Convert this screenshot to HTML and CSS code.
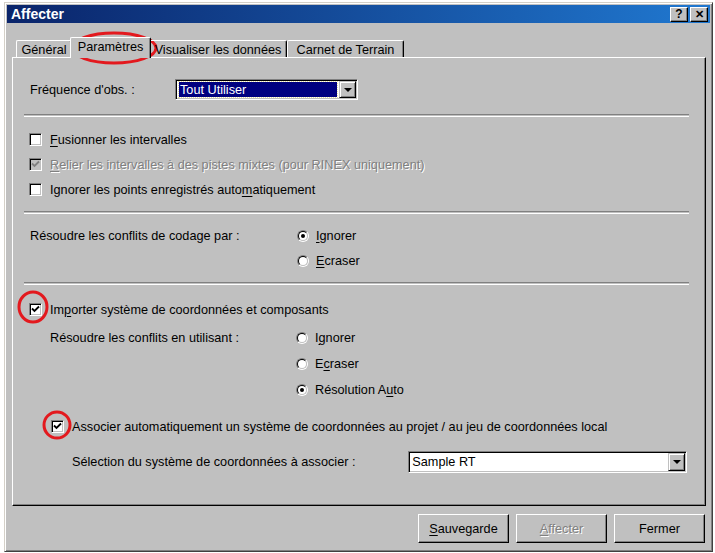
FILE: index.html
```html
<html>
    <head>
        <meta charset="UTF-8">
        <title>Affecter</title>
        <link rel="stylesheet" href="styles.css">
    </head>
    <body>
        <div class="window">
            <div class="titlebar">
                <span class="caption">Affecter</span>
                <span class="tbtn">?</span>
                <span class="tbtn close">&#x2715;</span>
            </div>

            <div class="tabs">
                <div class="tab" style="width: 56px">Général</div>
                <div class="tab active" style="width: 81px">Paramètres</div>
                <div class="tab" style="width: 138px">Visualiser les données</div>
                <div class="tab" style="width: 117px">Carnet de Terrain</div>
            </div>

            <div class="panel">
                <div class="row combo-row">
                    <span class="label freq">Fréquence d'obs. :</span>
                    <div class="combo small">
                        <div class="combo-text selected"><span>Tout Utiliser</span></div>
                        <div class="combo-arrow"><span class="tri"></span></div>
                    </div>
                </div>

                <div class="sep first"></div>

                <div class="checks">
                    <div class="row check-row">
                        <span class="box"></span>
                        <span><u>F</u>usionner les intervalles</span>
                    </div>
                    <div class="row check-row disabled">
                        <span class="box checked">
                            <svg width="9" height="9" viewBox="0 0 9 9"><path d="M1 3.5 L3.5 6 L8 1.5" /></svg>
                        </span>
                        <span class="grey"><u>R</u>elier les intervalles à des pistes mixtes (pour RINEX uniquement)</span>
                    </div>
                    <div class="row check-row">
                        <span class="box"></span>
                        <span>Ignorer les points enregistrés auto<u>m</u>atiquement</span>
                    </div>
                </div>

                <div class="sep"></div>

                <div class="group codage">
                    <div class="row radio-row">
                        <span class="label">Résoudre les conflits de codage par :</span>
                        <span class="radio on"><span class="ring"></span></span>
                        <span><u>I</u>gnorer</span>
                    </div>
                    <div class="row radio-row">
                        <span class="label"></span>
                        <span class="radio"><span class="ring"></span></span>
                        <span><u>E</u>craser</span>
                    </div>
                </div>

                <div class="sep"></div>

                <div class="row check-row importer">
                    <span class="box">
                        <svg width="9" height="9" viewBox="0 0 9 9"><path d="M1 3.5 L3.5 6 L8 1.5" /></svg>
                    </span>
                    <span>Im<u>p</u>orter système de coordonnées et composants</span>
                </div>

                <div class="group conflits">
                    <div class="row radio-row tall">
                        <span class="label">Résoudre les conflits en utilisant :</span>
                        <span class="radio"><span class="ring"></span></span>
                        <span>I<u>g</u>norer</span>
                    </div>
                    <div class="row radio-row tall">
                        <span class="label"></span>
                        <span class="radio"><span class="ring"></span></span>
                        <span>E<u>c</u>raser</span>
                    </div>
                    <div class="row radio-row tall">
                        <span class="label"></span>
                        <span class="radio on"><span class="ring"></span></span>
                        <span>Résolution A<u>u</u>to</span>
                    </div>
                </div>

                <div class="row check-row associer">
                    <span class="box">
                        <svg width="9" height="9" viewBox="0 0 9 9"><path d="M1 3.5 L3.5 6 L8 1.5" /></svg>
                    </span>
                    <span>Associer automatiquement un système de coordonnées au projet / au jeu de coordonnées local</span>
                </div>

                <div class="row combo-row selection">
                    <span class="label sel">Sélection du système de coordonnées à associer :</span>
                    <div class="combo wide">
                        <div class="combo-text"><span>Sample RT</span></div>
                        <div class="combo-arrow"><span class="tri"></span></div>
                    </div>
                </div>
            </div>

            <div class="buttons">
                <button class="btn"><u>S</u>auvegarde</button>
                <button class="btn" disabled><span class="grey"><u>A</u>ffecter</span></button>
                <button class="btn">Fermer</button>
            </div>
        </div>

        <!-- red hand-drawn markers -->
        <svg class="marks" width="715" height="553">
            <ellipse cx="114" cy="48" rx="42" ry="15" />
            <ellipse cx="33" cy="307" rx="14" ry="15" />
            <ellipse cx="57" cy="425" rx="13" ry="13" />
        </svg>
    </body>
</html>
```

FILE: styles.css
```css
body {
    margin: 0;
    background-color: white;
    font-family: "Liberation Sans", Arial, sans-serif;
    font-size: 12.7px;
    color: black;
}

u { text-decoration: underline; text-underline-offset: 2px; }

.window {
    box-sizing: border-box;
    width: 709px;
    height: 550px;
    margin: 2px 0 0 4px;
    padding: 2px;
    display: flex;
    flex-direction: column;
    background-color: #c0c0c0;
    border: 1px solid;
    border-color: #d4d0c8 #404040 #404040 #d4d0c8;
    box-shadow: inset 1px 1px #fff, inset -1px -1px #808080;
}

.titlebar {
    height: 18px;
    display: flex;
    align-items: center;
    padding: 0 2px 0 4px;
    background: linear-gradient(to right, #0a246a, #2078d0);
    color: white;
}

.caption {
    flex: 1;
    font-weight: bold;
    font-size: 14px;
}

.tbtn {
    box-sizing: border-box;
    width: 18px;
    height: 15px;
    margin-left: 2px;
    display: flex;
    align-items: center;
    justify-content: center;
    background-color: #c0c0c0;
    color: black;
    font-weight: bold;
    font-size: 12px;
    border: 1px solid;
    border-color: #fff #000 #000 #fff;
    box-shadow: inset -1px -1px #808080;
}

.tbtn.close { font-size: 11px; }

/* tab strip */
.tabs {
    display: flex;
    align-items: flex-end;
    height: 20px;
    margin-top: 14px;
    padding-left: 9px;
    position: relative;
    z-index: 1;
}

.tab {
    box-sizing: border-box;
    height: 17px;
    display: flex;
    justify-content: center;
    align-items: center;
    padding-top: 1px;
    border-top: 1px solid #fff;
    border-left: 1px solid #fff;
    border-right: 1px solid #000;
    box-shadow: inset -1px 0 #808080;
    border-radius: 2px 2px 0 0;
    white-space: nowrap;
}

.tab.active {
    height: 21px;
    margin: 0 -2px -1px;
    padding-bottom: 3px;
    background-color: #c0c0c0;
    position: relative;
}

.panel {
    box-sizing: border-box;
    width: 694px;
    height: 449px;
    margin-left: 5px;
    padding: 0 18px 0 16px;
    border: 1px solid;
    border-color: #fff #000 #000 #fff;
    box-shadow: inset -1px -1px #808080;
}

.row {
    display: flex;
    align-items: center;
    white-space: nowrap;
}

.combo-row { margin-top: 21px; height: 21px; }

.label.freq { width: 145px; padding-left: 1px; }

.sep {
    height: 1px;
    margin: 9px -2px 0 -5px;
    border-top: 1px solid #808080;
    border-bottom: 1px solid #fff;
}

.sep.first { margin-top: 14px; }

.checks { margin-top: 10px; }

.check-row { height: 25px; }

.box {
    box-sizing: border-box;
    width: 13px;
    height: 13px;
    margin-right: 8px;
    display: flex;
    align-items: center;
    justify-content: center;
    background-color: white;
    border: 1px solid;
    border-color: #808080 #fff #fff #808080;
    box-shadow: inset 1px 1px #000, inset -1px -1px #c0c0c0;
}

.box svg path {
    fill: none;
    stroke: black;
    stroke-width: 1.8;
}

.box.checked { background-color: #c0c0c0; }
.box.checked svg path { stroke: #808080; }

.grey {
    color: #808080;
    text-shadow: 1px 1px #fff;
}

.group.codage { margin-top: 9px; }
.group.codage .label { width: 267px; padding-left: 1px; }

.radio-row { height: 25px; }
.radio-row.tall { height: 26px; }

.radio {
    box-sizing: border-box;
    width: 12px;
    height: 12px;
    margin-right: 7px;
    border-radius: 50%;
    border: 1px solid;
    border-color: #808080 #fff #fff #808080;
}

.radio .ring {
    box-sizing: border-box;
    display: flex;
    align-items: center;
    justify-content: center;
    width: 10px;
    height: 10px;
    border-radius: 50%;
    background-color: white;
    border: 1px solid;
    border-color: #000 #c0c0c0 #c0c0c0 #000;
}

.radio.on .ring::after {
    content: "";
    width: 4px;
    height: 4px;
    border-radius: 50%;
    background-color: black;
}

.importer { margin-top: 12px; }

.group.conflits { margin-top: 3px; }
.group.conflits .label { width: 246px; padding-left: 21px; }

.associer { margin-top: 11px; padding-left: 22px; }

.selection { margin-top: 12px; height: 22px; }
.label.sel { width: 338px; padding-left: 43px; }

/* drop-down lists */
.combo {
    box-sizing: border-box;
    height: 21px;
    display: flex;
    padding: 1px;
    background-color: white;
    border: 1px solid;
    border-color: #808080 #fff #fff #808080;
    box-shadow: inset 1px 1px #000, inset -1px -1px #c0c0c0;
}

.combo.small { width: 183px; }
.combo.wide { width: 280px; height: 22px; }

.combo-text {
    flex: 1;
    display: flex;
    align-items: center;
    padding: 1px 2px;
}

.combo-text.selected span {
    flex: 1;
    height: 100%;
    box-sizing: border-box;
    display: flex;
    align-items: center;
    padding-left: 1px;
    background-color: #000080;
    color: white;
    outline: 1px dotted #e8e0a0;
}

.combo-arrow {
    box-sizing: border-box;
    width: 17px;
    display: flex;
    align-items: center;
    justify-content: center;
    background-color: #c0c0c0;
    border: 1px solid;
    border-color: #c0c0c0 #000 #000 #c0c0c0;
    box-shadow: inset 1px 1px #fff, inset -1px -1px #808080;
}

.tri {
    width: 0;
    height: 0;
    border-left: 4px solid transparent;
    border-right: 4px solid transparent;
    border-top: 4px solid black;
}

.buttons {
    display: flex;
    justify-content: flex-end;
    gap: 7px;
    margin-top: 8px;
    padding-right: 5px;
}

.btn {
    box-sizing: border-box;
    width: 91px;
    height: 29px;
    padding: 0;
    font-family: inherit;
    font-size: 12.7px;
    color: black;
    background-color: #c0c0c0;
    border: 1px solid;
    border-color: #fff #000 #000 #fff;
    box-shadow: inset -1px -1px #808080;
    border-radius: 0;
}

.marks {
    position: absolute;
    top: 0;
    left: 0;
    pointer-events: none;
}

.marks ellipse {
    fill: none;
    stroke: #e3191e;
    stroke-width: 3;
}
```
